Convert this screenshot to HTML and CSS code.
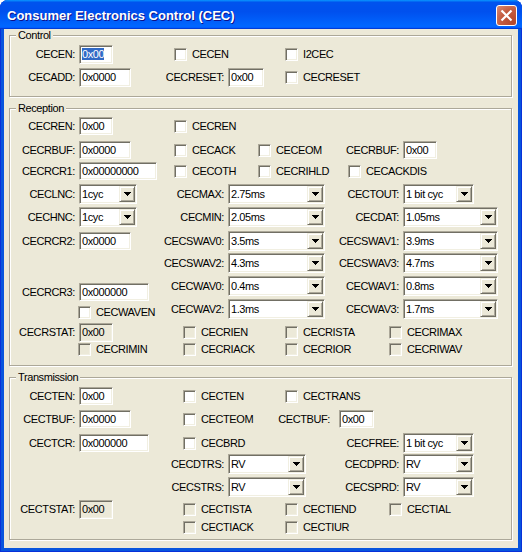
FILE: index.html
```html
<!DOCTYPE html>
<html>
<head>
<meta charset="utf-8" />
<title>Consumer Electronics Control (CEC)</title>
<link rel="stylesheet" href="styles.css">
</head>
<body>
<svg class="defs"><symbol id="arrow" viewBox="0 0 7 4"><path d="M0 0H7V1H6V2H5V3H4V4H3V3H2V2H1V1H0Z"/></symbol></svg>

<div class="window">
	<div class="titlebar">
		<span class="title">Consumer Electronics Control (CEC)</span>
		<span class="close"><svg width="19" height="19" viewBox="0 0 19 19"><path d="M4.5 4.5L14.5 14.5M14.5 4.5L4.5 14.5" stroke="#fff" stroke-width="2.2"/></svg></span>
	</div>

	<div class="client">
		<!-- Control -->
		<div class="group g-control">
			<span class="cap">Control</span>
			<div class="row h19">
				<span class="lab lab-a">CECEN:</span>
				<span class="edit tall w34 at-b"><span class="sel">0x00</span></span>
				<label class="cb at-c"><span class="box"></span>CECEN</label>
				<label class="cb at-g"><span class="box"></span>I2CEC</label>
			</div>
			<div class="row h19 mt4">
				<span class="lab lab-a">CECADD:</span>
				<span class="edit tall w52 at-b">0x0000</span>
				<span class="lab lab-m">CECRESET:</span>
				<span class="edit tall w36 at-e">0x00</span>
				<label class="cb at-g"><span class="box"></span>CECRESET</label>
			</div>
		</div>

		<!-- Reception -->
		<div class="group g-rec">
			<span class="cap">Reception</span>
			<div class="row">
				<span class="lab lab-a">CECREN:</span>
				<span class="edit w34 at-b">0x00</span>
				<label class="cb at-c"><span class="box"></span>CECREN</label>
			</div>
			<div class="row mt6">
				<span class="lab lab-a">CECRBUF:</span>
				<span class="edit w52 at-b">0x0000</span>
				<label class="cb at-c"><span class="box"></span>CECACK</label>
				<label class="cb at-f"><span class="box"></span>CECEOM</label>
				<span class="lab lab-g">CECRBUF:</span>
				<span class="edit w34 at-k">0x00</span>
			</div>
			<div class="row mt3">
				<span class="lab lab-a">CECRCR1:</span>
				<span class="edit w78 at-b">0x00000000</span>
				<label class="cb at-c"><span class="box"></span>CECOTH</label>
				<label class="cb at-f"><span class="box"></span>CECRIHLD</label>
				<label class="cb at-i"><span class="box"></span>CECACKDIS</label>
			</div>
			<div class="row h20 mt4">
				<span class="lab lab-a">CECLNC:</span>
				<span class="combo w58 at-b"><span class="val">1cyc</span><span class="btn"><svg><use href="#arrow"/></svg></span></span>
				<span class="lab lab-m">CECMAX:</span>
				<span class="combo w97 at-e"><span class="val">2.75ms</span><span class="btn"><svg><use href="#arrow"/></svg></span></span>
				<span class="lab lab-g">CECTOUT:</span>
				<span class="combo w71 at-k"><span class="val">1 bit cyc</span><span class="btn"><svg><use href="#arrow"/></svg></span></span>
			</div>
			<div class="row h20 mt3">
				<span class="lab lab-a">CECHNC:</span>
				<span class="combo w58 at-b"><span class="val">1cyc</span><span class="btn"><svg><use href="#arrow"/></svg></span></span>
				<span class="lab lab-m">CECMIN:</span>
				<span class="combo w97 at-e"><span class="val">2.05ms</span><span class="btn"><svg><use href="#arrow"/></svg></span></span>
				<span class="lab lab-g">CECDAT:</span>
				<span class="combo w95 at-k"><span class="val">1.05ms</span><span class="btn"><svg><use href="#arrow"/></svg></span></span>
			</div>
			<div class="row h20 mt4">
				<span class="lab lab-a">CECRCR2:</span>
				<span class="edit w52 at-b">0x0000</span>
				<span class="lab lab-m">CECSWAV0:</span>
				<span class="combo w97 at-e"><span class="val">3.5ms</span><span class="btn"><svg><use href="#arrow"/></svg></span></span>
				<span class="lab lab-g">CECSWAV1:</span>
				<span class="combo w95 at-k"><span class="val">3.9ms</span><span class="btn"><svg><use href="#arrow"/></svg></span></span>
			</div>
			<div class="row h20 mt2">
				<span class="lab lab-m">CECSWAV2:</span>
				<span class="combo w97 at-e"><span class="val">4.3ms</span><span class="btn"><svg><use href="#arrow"/></svg></span></span>
				<span class="lab lab-g">CECSWAV3:</span>
				<span class="combo w95 at-k"><span class="val">4.7ms</span><span class="btn"><svg><use href="#arrow"/></svg></span></span>
			</div>
			<div class="row pair mt3">
				<div class="stack">
					<span class="lab">CECRCR3:</span>
					<span class="edit w70">0x000000</span>
					<label class="cb"><span class="box"></span>CECWAVEN</label>
				</div>
				<span class="lab lab-m">CECWAV0:</span>
				<span class="combo w97 at-e"><span class="val">0.4ms</span><span class="btn"><svg><use href="#arrow"/></svg></span></span>
				<span class="lab lab-g">CECWAV1:</span>
				<span class="combo w95 at-k"><span class="val">0.8ms</span><span class="btn"><svg><use href="#arrow"/></svg></span></span>
				<span class="lab lab-m lo">CECWAV2:</span>
				<span class="combo w97 at-e lo"><span class="val">1.3ms</span><span class="btn"><svg><use href="#arrow"/></svg></span></span>
				<span class="lab lab-g lo">CECWAV3:</span>
				<span class="combo w95 at-k lo"><span class="val">1.7ms</span><span class="btn"><svg><use href="#arrow"/></svg></span></span>
			</div>
			<div class="row h19 mt4">
				<span class="lab lab-a">CECRSTAT:</span>
				<span class="edit tall off w34 at-b">0x00</span>
				<label class="cb off at-d"><span class="box"></span>CECRIEN</label>
				<label class="cb off at-g"><span class="box"></span>CECRISTA</label>
				<label class="cb off at-j"><span class="box"></span>CECRIMAX</label>
			</div>
			<div class="row h13 mt1">
				<label class="cb off at-b"><span class="box"></span>CECRIMIN</label>
				<label class="cb off at-d"><span class="box"></span>CECRIACK</label>
				<label class="cb off at-g"><span class="box"></span>CECRIOR</label>
				<label class="cb off at-j"><span class="box"></span>CECRIWAV</label>
			</div>
		</div>

		<!-- Transmission -->
		<div class="group g-trans">
			<span class="cap">Transmission</span>
			<div class="row">
				<span class="lab lab-a">CECTEN:</span>
				<span class="edit w34 at-b">0x00</span>
				<label class="cb at-d"><span class="box"></span>CECTEN</label>
				<label class="cb at-g"><span class="box"></span>CECTRANS</label>
			</div>
			<div class="row mt5">
				<span class="lab lab-a">CECTBUF:</span>
				<span class="edit w52 at-b">0x0000</span>
				<label class="cb at-d"><span class="box"></span>CECTEOM</label>
				<span class="lab lab-f">CECTBUF:</span>
				<span class="edit w35 at-h">0x00</span>
			</div>
			<div class="row h20 mt5">
				<span class="lab lab-a">CECTCR:</span>
				<span class="edit w70 at-b">0x000000</span>
				<label class="cb at-d"><span class="box"></span>CECBRD</label>
				<span class="lab lab-g">CECFREE:</span>
				<span class="combo w71 at-k"><span class="val">1 bit cyc</span><span class="btn"><svg><use href="#arrow"/></svg></span></span>
			</div>
			<div class="row h20 mt1">
				<span class="lab lab-m">CECDTRS:</span>
				<span class="combo w78 at-e"><span class="val">RV</span><span class="btn"><svg><use href="#arrow"/></svg></span></span>
				<span class="lab lab-g">CECDPRD:</span>
				<span class="combo w71 at-k"><span class="val">RV</span><span class="btn"><svg><use href="#arrow"/></svg></span></span>
			</div>
			<div class="row h20 mt3">
				<span class="lab lab-m">CECSTRS:</span>
				<span class="combo w78 at-e"><span class="val">RV</span><span class="btn"><svg><use href="#arrow"/></svg></span></span>
				<span class="lab lab-g">CECSPRD:</span>
				<span class="combo w71 at-k"><span class="val">RV</span><span class="btn"><svg><use href="#arrow"/></svg></span></span>
			</div>
			<div class="row h19 mt3">
				<span class="lab lab-a">CECTSTAT:</span>
				<span class="edit tall off w34 at-b">0x00</span>
				<label class="cb off at-d"><span class="box"></span>CECTISTA</label>
				<label class="cb off at-g"><span class="box"></span>CECTIEND</label>
				<label class="cb off at-j"><span class="box"></span>CECTIAL</label>
			</div>
			<div class="row h13 mt2">
				<label class="cb off at-d"><span class="box"></span>CECTIACK</label>
				<label class="cb off at-g"><span class="box"></span>CECTIUR</label>
			</div>
		</div>
	</div>
</div>
</body>
</html>
```

FILE: styles.css
```css
body{ margin: 0; background: #fff; color: #000; font-family: "Liberation Sans", Arial, sans-serif; font-size: 11px; letter-spacing: -0.4px; }
.defs{ display: none; }

/* window frame */
.window{ width: 522px; height: 552px; display: flex; flex-direction: column; overflow: hidden; border-radius: 8px 8px 0 0; background: #0855dd; box-shadow: inset 1px 0 #0831d9, inset -1px 0 #0831d9, inset 0 -1px #0831d9; }
.titlebar{ height: 29px; flex: none; box-sizing: border-box; display: flex; justify-content: space-between; align-items: flex-start; padding: 0 5px 0 7px;
	background: linear-gradient(180deg, #0997ff, #0053ee 8%, #0050ee 40%, #06f 88%, #06f 93%, #005bff 95%, #003dd7 96%, #003dd7); }
.title{ margin-top: 8px; line-height: 15px; font-size: 13px; font-weight: bold; letter-spacing: 0; color: #fff; text-shadow: 1px 1px #0f1089; }
.close{ margin-top: 5px; width: 21px; height: 21px; box-sizing: border-box; border: 1px solid #fff; border-radius: 3px; display: flex; align-items: center; justify-content: center;
	background: radial-gradient(circle at 85% 85%, #b4482c, #c45c40 55%, #d7876f 95%); }
.client{ height: 519px; margin: 0 4px; box-sizing: border-box; padding-top: 6px; background: #ece9d8; }

/* group boxes */
.group{ position: relative; margin: 0 6px 0 5px; border: 1px solid #aca899; box-shadow: inset 1px 1px #fff, 1px 1px #fff; }
.group + .group{ margin-top: 11px; }
.cap{ position: absolute; top: -7px; left: 6px; padding: 0 2px; line-height: 13px; background: #ece9d8; }
.g-control{ padding: 9px 0; }
.g-rec{ padding: 8px 0 9px; }
.g-trans{ padding: 9px 0 5px; }

/* rows share one set of column lines */
.row{ display: grid; height: 18px; align-items: center;
	grid-template-columns: [a] 69px [b] 81px [m] 14px [c] 9px [d] 45px [e] 30px [f] 27px [g] 54px [h] 9px [i] 41px [j] 14px [k] 108px [z]; }
.row > *{ grid-row: 1; }
.row > .lo{ grid-row: 2; }
.row.h13{ height: 13px; }
.row.h19{ height: 19px; }
.row.h20{ height: 20px; }
.row.pair{ height: 43px; grid-template-rows: 20px 20px; row-gap: 3px; align-content: start; }
.mt1{ margin-top: 1px; } .mt2{ margin-top: 2px; } .mt3{ margin-top: 3px; } .mt4{ margin-top: 4px; } .mt5{ margin-top: 5px; } .mt6{ margin-top: 6px; }

.stack{ grid-column: a / e; grid-row: 1 / 3; align-self: start; display: grid; grid-template-columns: 69px auto; grid-template-rows: 18px 13px; row-gap: 5px; padding-top: 7px; align-items: center; }
.stack .cb{ grid-column: 2; margin-left: -1px; }

.lab{ white-space: nowrap; text-align: right; padding-right: 4px; line-height: 13px; }
.lab-a{ grid-column: a / b; }
.lab-m{ grid-column: m / e; }
.lab-g{ grid-column: g / k; }
.lab-f{ grid-column: f / h; padding-right: 9px; }

.at-b{ grid-column: b / z; } .at-c{ grid-column: c / z; } .at-d{ grid-column: d / z; }
.at-e{ grid-column: e / z; } .at-f{ grid-column: f / z; } .at-g{ grid-column: g / z; }
.at-h{ grid-column: h / z; } .at-i{ grid-column: i / z; } .at-j{ grid-column: j / z; }
.at-k{ grid-column: k / z; }

/* checkboxes */
.cb{ justify-self: start; display: flex; align-items: center; gap: 5px; white-space: nowrap; line-height: 13px; }
.cb.at-b{ margin-left: -1px; }
.box{ width: 13px; height: 13px; box-sizing: border-box; background: #fff; border: 1px solid; border-color: #aca899 #fff #fff #aca899; box-shadow: inset 1px 1px #716f64, inset -1px -1px #f1efe2; }
.cb.off .box{ background: #ece9d8; }

/* edit boxes */
.edit{ justify-self: start; height: 18px; box-sizing: border-box; padding: 0 2px; line-height: 16px; white-space: nowrap; overflow: hidden; background: #fff; border: 1px solid; border-color: #aca899 #fff #fff #aca899; box-shadow: inset 1px 1px #716f64, inset -1px -1px #f1efe2; }
.edit.tall{ height: 19px; line-height: 17px; }
.edit.off{ background: #ece9d8; }
.sel{ background: #316ac5; color: #fff; }

/* combo boxes */
.combo{ justify-self: start; display: flex; height: 20px; box-sizing: border-box; background: #fff; border: 1px solid; border-color: #aca899 #fff #fff #aca899; box-shadow: inset 1px 1px #716f64, inset -1px -1px #f1efe2; }
.combo .val{ flex: 1; padding-left: 2px; line-height: 18px; white-space: nowrap; overflow: hidden; }
.combo .btn{ flex: none; width: 16px; height: 16px; margin: 1px; box-sizing: border-box; display: flex; align-items: center; justify-content: center; background: #ece9d8; border: 1px solid; border-color: #f1efe2 #716f64 #716f64 #f1efe2; box-shadow: inset 1px 1px #fff, inset -1px -1px #aca899; }
.btn svg{ width: 7px; height: 4px; }

.w34{ width: 34px; } .w35{ width: 35px; } .w36{ width: 36px; } .w52{ width: 52px; } .w58{ width: 58px; }
.w70{ width: 70px; } .w71{ width: 71px; } .w78{ width: 78px; } .w95{ width: 95px; } .w97{ width: 97px; }
```
